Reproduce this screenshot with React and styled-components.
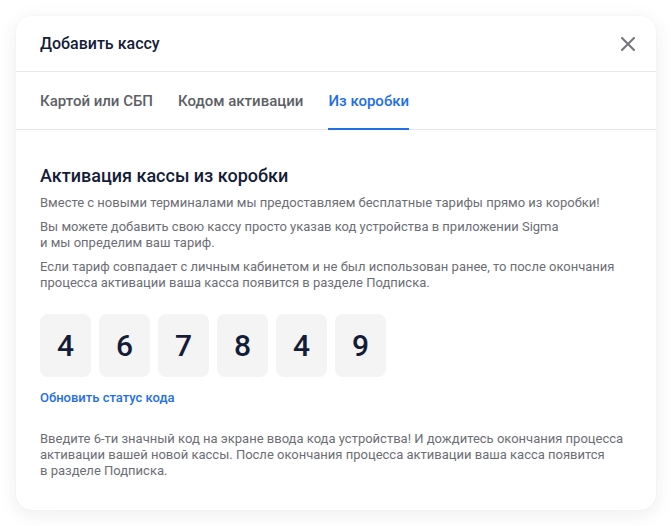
import React, { useState } from 'react';
import styled, { createGlobalStyle } from 'styled-components';

const GlobalStyle = createGlobalStyle`
  html, body {
    margin: 0;
    background: #ffffff;
  }
  body {
    font-family: Roboto, 'Noto Sans', Arial, sans-serif;
    -webkit-font-smoothing: antialiased;
  }
`;

const Page = styled.div`
  padding: 16px;
`;

const Card = styled.div`
  width: 640px;
  background: #ffffff;
  border-radius: 16px;
  box-shadow: 0 4px 20px rgba(20, 24, 40, 0.08), 0 0 2px rgba(20, 24, 40, 0.04);
  overflow: hidden;
`;

const Header = styled.div`
  display: flex;
  align-items: center;
  justify-content: space-between;
  height: 55px;
  padding: 0 24px;
  border-bottom: 1px solid #e5e6ea;
`;

const Title = styled.h2`
  margin: 0;
  font-size: 16px;
  font-weight: 500;
  color: #141c37;
`;

const CloseButton = styled.button`
  display: flex;
  align-items: center;
  justify-content: center;
  width: 24px;
  height: 24px;
  margin-right: -8px;
  padding: 0;
  border: 0;
  background: none;
  color: #74757d;
  cursor: pointer;
`;

const Tabs = styled.div`
  display: flex;
  gap: 25px;
  height: 57px;
  padding: 0 24px;
  border-bottom: 1px solid #e5e6ea;
`;

const Tab = styled.button`
  position: relative;
  padding: 0;
  border: 0;
  background: none;
  font-family: inherit;
  font-size: 15px;
  font-weight: 500;
  color: ${({ active }) => (active ? '#1f6ee8' : '#5d5f67')};
  cursor: pointer;

  &::after {
    content: '';
    position: absolute;
    left: 0;
    right: 0;
    bottom: -1px;
    height: 2px;
    background: ${({ active }) => (active ? '#1f6ee8' : 'transparent')};
  }
`;

const Content = styled.div`
  padding: 32px 24px 31px;
`;

const Heading = styled.h3`
  margin: 0 0 5px;
  font-size: 18px;
  line-height: 28px;
  font-weight: 500;
  color: #141c37;
`;

const Text = styled.p`
  margin: 0 0 8px;
  font-size: 13px;
  line-height: 16px;
  color: #6c6e76;

  &:last-child {
    margin-bottom: 0;
  }
`;

const Code = styled.div`
  display: flex;
  gap: 8px;
  margin: 23px 0 10px;
`;

const Digit = styled.div`
  display: flex;
  align-items: center;
  justify-content: center;
  width: 51px;
  height: 63px;
  border-radius: 8px;
  background: #f4f4f5;
  font-size: 30px;
  font-weight: 500;
  color: #141c37;
`;

const RefreshLink = styled.a`
  display: inline-block;
  font-size: 13px;
  line-height: 16px;
  font-weight: 500;
  color: #1f6ee8;
  text-decoration: none;
  cursor: pointer;
`;

const Hint = styled(Text)`
  margin-top: 25px;
`;

const tabs = ['Картой или СБП', 'Кодом активации', 'Из коробки'];
const code = ['4', '6', '7', '8', '4', '9'];

const CloseIcon = () => (
  <svg width="14" height="14" viewBox="0 0 14 14" fill="none">
    <path d="M1 1L13 13M13 1L1 13" stroke="currentColor" strokeWidth="2" strokeLinecap="square" />
  </svg>
);

export default function App() {
  const [activeTab, setActiveTab] = useState(2);

  return (
    <Page>
      <GlobalStyle />
      <Card>
        <Header>
          <Title>Добавить кассу</Title>
          <CloseButton aria-label="Закрыть">
            <CloseIcon />
          </CloseButton>
        </Header>
        <Tabs>
          {tabs.map((label, i) => (
            <Tab key={label} active={i === activeTab} onClick={() => setActiveTab(i)}>
              {label}
            </Tab>
          ))}
        </Tabs>
        <Content>
          <Heading>Активация кассы из коробки</Heading>
          <Text>Вместе с новыми терминалами мы предоставляем бесплатные тарифы прямо из коробки!</Text>
          <Text>
            Вы можете добавить свою кассу просто указав код устройства в приложении Sigma
            <br />
            и мы определим ваш тариф.
          </Text>
          <Text>
            Если тариф совпадает с личным кабинетом и не был использован ранее, то после окончания
            <br />
            процесса активации ваша касса появится в разделе Подписка.
          </Text>
          <Code>
            {code.map((d, i) => (
              <Digit key={i}>{d}</Digit>
            ))}
          </Code>
          <RefreshLink>Обновить статус кода</RefreshLink>
          <Hint>
            Введите 6-ти значный код на экране ввода кода устройства! И дождитесь окончания процесса
            <br />
            активации вашей новой кассы. После окончания процесса активации ваша касса появится
            <br />
            в разделе Подписка.
          </Hint>
        </Content>
      </Card>
    </Page>
  );
}
